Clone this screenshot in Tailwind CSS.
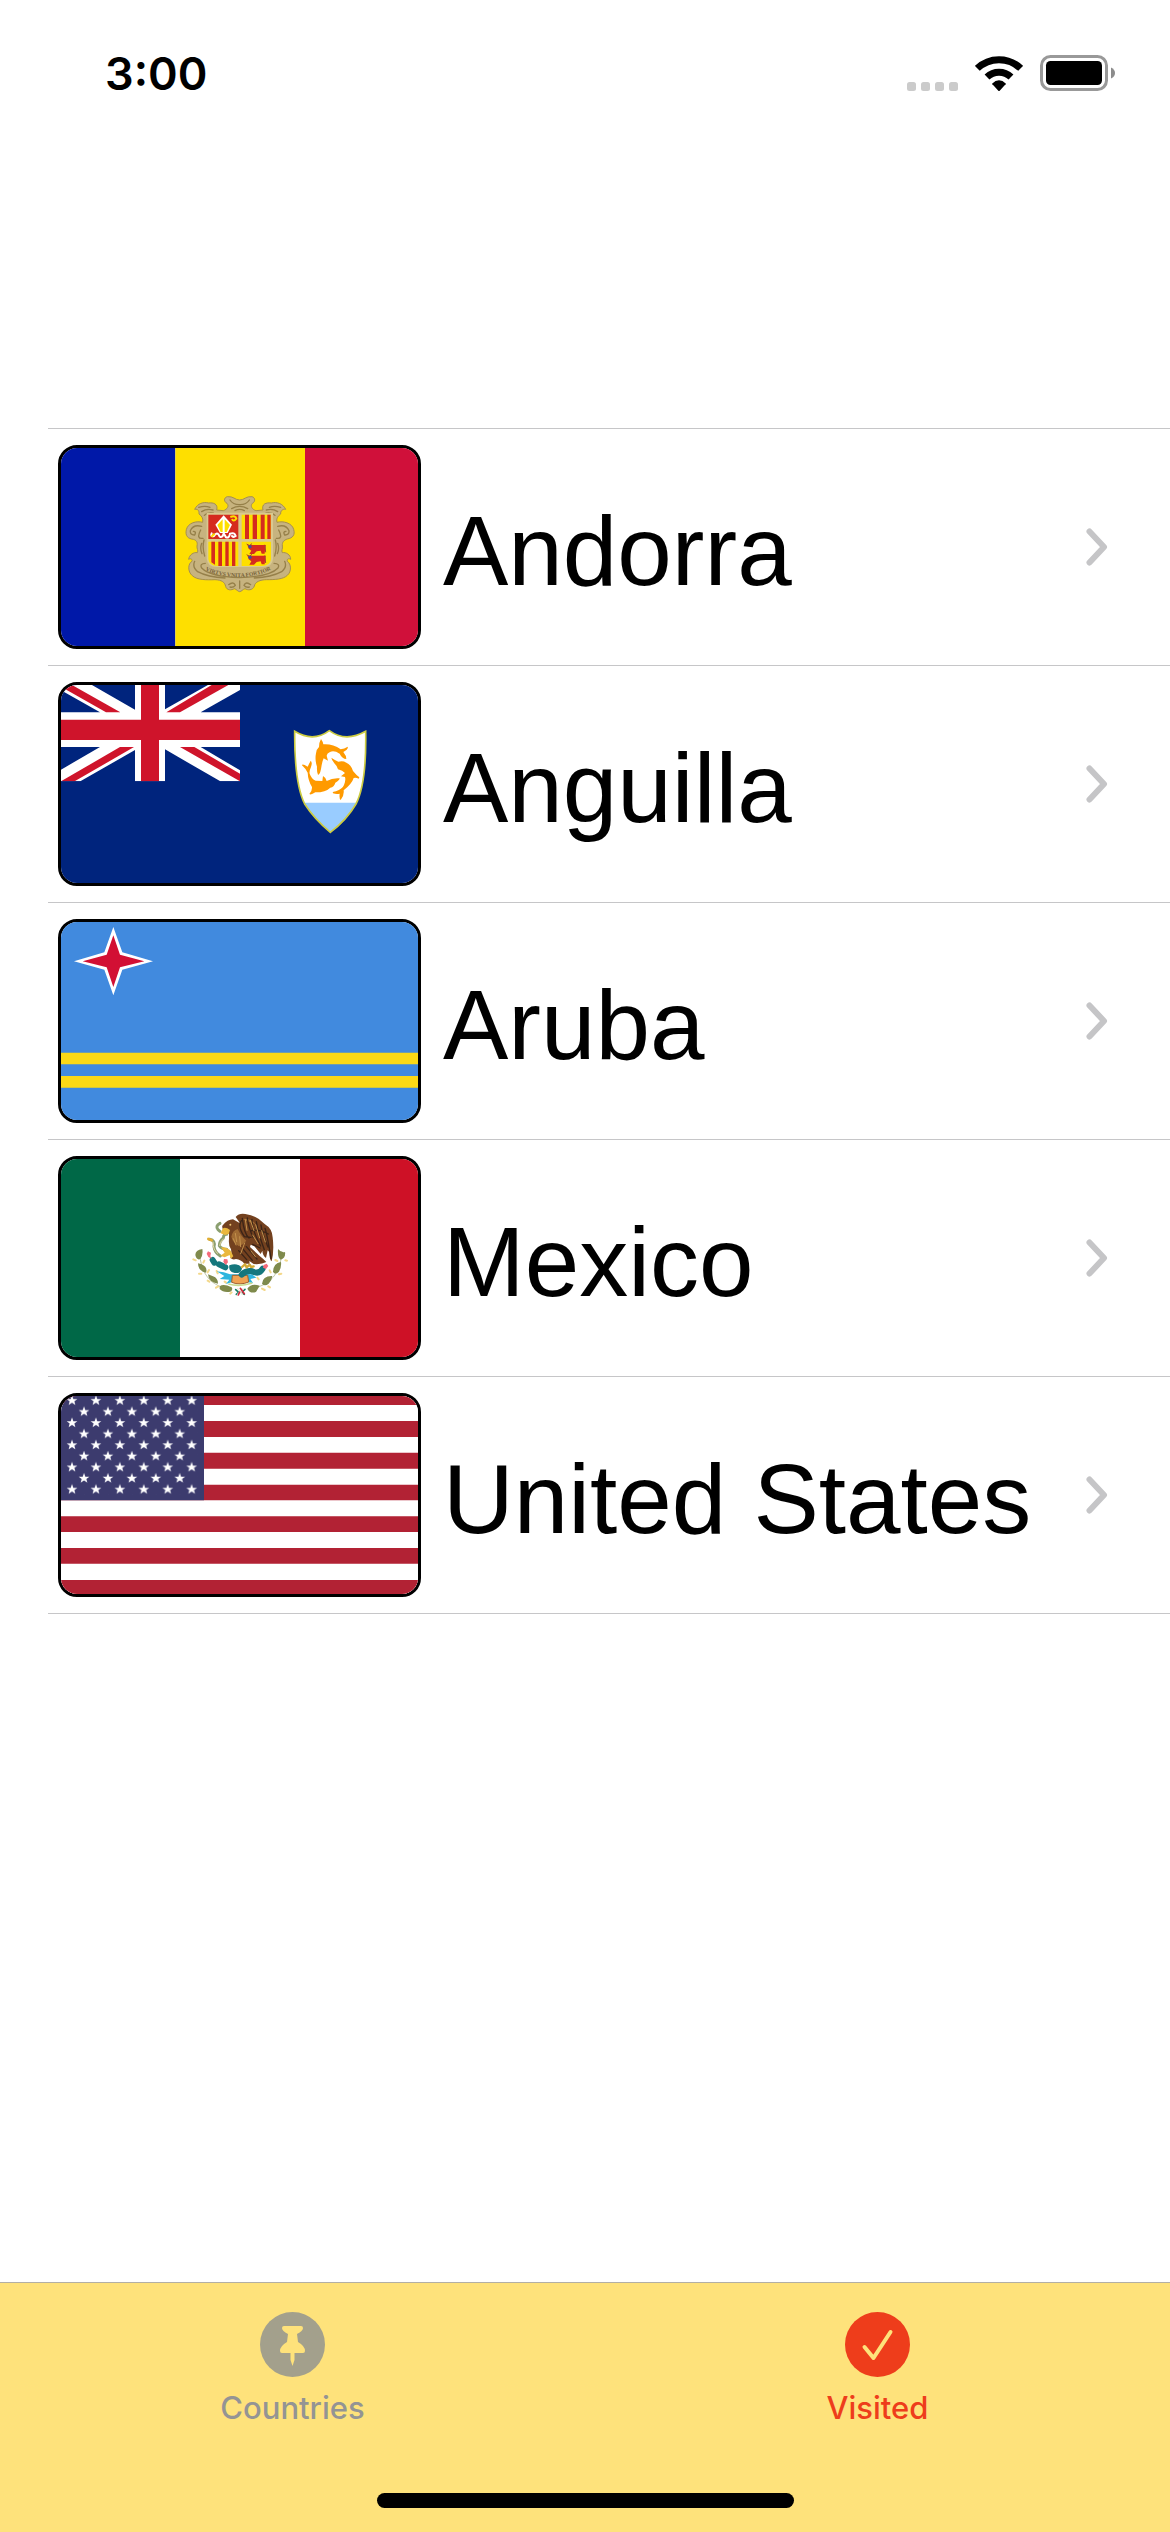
<!DOCTYPE html>
<html lang="en">
<head>
<meta charset="utf-8">
<meta name="viewport" content="width=device-width, initial-scale=1">
<title>Visited</title>
<script src="https://cdn.jsdelivr.net/npm/@tailwindcss/browser@4"></script>
</head>
<body class="bg-white text-black font-[Inter,'Liberation_Sans',sans-serif]">
<svg class="hidden" aria-hidden="true">
  <symbol id="chevron" viewBox="0 0 22 38"><path d="M3.5 3.5 L18 19 L3.5 34.500" fill="none" stroke="#c5c5c7" stroke-width="6" stroke-linecap="round" stroke-linejoin="round"/></symbol>
</svg>
<div class="flex min-h-screen flex-col">
  <header class="flex h-[149px] items-start justify-between pl-[105px] pr-[54px] pt-[46px]">
    <time class="text-[45px] leading-[56px] font-semibold">3:00</time>
    <div class="flex items-end pt-[9px]">
      <svg class="h-9 w-[52px]" viewBox="0 0 52 36" fill="#cbcbcb" aria-label="No signal"><rect y="27" width="9" height="9" rx="2.500"/><rect x="14" y="27" width="9" height="9" rx="2.500"/><rect x="28" y="27" width="9" height="9" rx="2.500"/><rect x="42" y="27" width="9" height="9" rx="2.500"/></svg>
      <svg class="ml-4 h-9 w-12" viewBox="285 75 144 108" aria-label="Wi-Fi">
        <g fill="none" stroke="#000" stroke-width="21"><path d="M292 115 A94 94 0 0 1 422 115"/><path d="M321 141 A52 52 0 0 1 393 141"/></g>
        <path d="M336 161 Q357 141 378 161 Q377 164 374 166 L359 182 Q357 184 355 182 L340 166 Q337 164 336 161Z"/>
      </svg>
      <svg class="ml-[17px] h-9 w-[76px]" viewBox="0 0 76 36" aria-label="Battery full"><rect x="1.500" y="1.500" width="65" height="33" rx="9" fill="none" stroke="#999" stroke-width="3"/><rect x="6" y="6" width="56" height="24" rx="4.500"/><path d="M71 12.500 Q75 14.500 75 18 Q75 21.500 71 23.500Z" fill="#8c8c8c"/></svg>
    </div>
  </header>

  <main class="grow pt-[279px]">
    <ul class="ml-12 border-t border-[#c6c6c8]">
      <li class="border-b border-[#c6c6c8]">
        <a href="#andorra" class="flex h-[236px] items-center pl-2.5 pr-[62px]">
          <svg class="box-border h-[204px] w-[363px] shrink-0 rounded-[19px] border-3 border-black" viewBox="33 54 1071 594" preserveAspectRatio="none" aria-hidden="true">
            <path fill="#0018a8" d="M0 0H376V700H0z"/><path fill="#fedf00" d="M376 0H765V700H376z"/><path fill="#d0103a" d="M765 0H1140V700H765z"/>
            <path fill="#c7b37f" stroke="#a58f50" stroke-width="3" stroke-linejoin="round" d="M569 210 C555 210 550 198 532 200 C520 203 522 216 531 220 C538 228 532 238 520 242 L500 240 C505 222 490 217 476 219 C460 215 443 220 434 238 C445 236 448 244 447 252 C456 258 460 266 458 277 C440 272 414 278 409 299 C405 318 414 326 430 328 C438 330 444 336 441 348 C440 357 446 361 442 368 C431 366 418 374 416 388 C422 384 428 388 426 394 C414 400 412 425 427 437 C440 450 470 450 495 449 C515 450 524 456 527 469 C530 482 545 481 553 476 C560 478 564 485 569 485 C574 485 578 478 585 476 C593 481 608 482 613 468 C615 456 630 449 650 449 C675 449 700 448 712 436 C725 425 724 402 712 394 C710 387 716 384 722 388 C722 374 708 366 697 368 C693 361 699 357 697 348 C696 336 702 330 712 327 C728 324 736 315 731 298 C726 279 700 272 681 277 C678 266 684 258 692 252 C691 244 697 236 707 238 C698 220 680 215 664 219 C648 217 634 222 639 240 L618 242 C606 238 600 228 607 220 C616 216 617 203 606 200 C588 198 583 210 569 210Z"/>
            <g fill="none" stroke="#96804a" stroke-width="4" stroke-linecap="round">
              <path d="M540 210 Q550 225 569 224 Q588 225 598 210 M545 236 Q569 222 593 236 M555 242 Q569 234 583 242"/>
              <path d="M446 232 Q465 226 480 232 M455 245 Q470 235 489 240 M463 256 Q472 246 490 249 M692 232 Q673 226 658 232 M683 245 Q668 235 649 240 M675 256 Q666 246 648 249"/>
              <path d="M455 289 Q430 282 421 302 Q420 316 434 315 Q440 304 430 304 M452 300 Q437 328 459 325 M683 289 Q708 282 717 302 Q718 316 704 315 Q698 304 708 304 M686 300 Q701 328 679 325"/>
              <path d="M455 340 Q449 357 456 371 M462 330 Q456 352 464 378 M683 340 Q689 357 682 371 M676 330 Q682 352 674 378"/>
              <path d="M466 400 Q448 401 455 414 Q480 440 569 443 Q660 440 684 414 Q691 401 672 400 M434 394 Q426 411 443 425 Q474 442 525 444 M704 394 Q712 411 695 425 Q664 442 613 444"/>
              <path d="M536 464 Q550 453 556 466 Q549 474 540 471 M602 464 Q588 453 582 466 Q589 474 598 471 M569 453 V475"/>
            </g>
            <path fill="#d9c98f" d="M470 248H669V386Q668 411 638 411H501Q472 411 470 386z"/>
            <path fill="#d52b1e" d="M475 254H565V327H475z"/>
            <path fill="#fedf00" d="M575 254H663V327H575z M475 335H565V408H502Q478 408 475 388z M575 335H663V388Q660 408 636 408H575z"/>
            <path fill="#d52b1e" d="M585 254h12v73h-12z M608 254h13v73h-13z M632 254h12v73h-12z M652 254h10v73h-10z M484 335h11v69l-11-7z M505 335h11v73h-11z M526 335h10v73h-10z M546 335h10v73h-10z"/>
            <path fill="#fff" d="M521 256 L546 284 L533 309 H510 L496 284Z"/><path fill="#fedf00" d="M518 268 V306 H512 L502 285Z M524 268 V306 H530 L540 285Z"/>
            <path fill="none" stroke="#fff" stroke-width="6" stroke-linecap="round" d="M485 310 Q480 321 492 318 Q499 306 506 314 Q510 326 518 318 L521 310 L528 322 Q538 325 540 311 Q554 306 557 318 Q551 323 546 318"/>
            <path fill="none" stroke="#fedf00" stroke-width="6" d="M541 261 Q557 255 559 266 Q550 277 546 267 M484 320 L494 311"/>
            <g id="cow"><path fill="#d52b1e" d="M592 344 L605 345 H640 Q650 342 646 350 L644 371 H635 L632 362 L620 364 L612 372 H598 L604 362 L596 356Z"/><path d="M590 342 l8 5 8-6 M645 345 l2 22" fill="none" stroke="#a4472e" stroke-width="3"/><circle cx="600" cy="350" r="5" fill="#405096"/></g>
            <use href="#cow" y="32"/>
            <path id="motto" fill="none" d="M464 420 Q510 442 569 441 Q628 440 680 411"/>
            <text font-family="Liberation Serif,serif" font-size="17" font-weight="700" fill="#74603a"><textPath href="#motto" startOffset="2">VIRTVS VNITA FORTIOR</textPath></text>
          </svg>
          <span class="ml-[22px] grow whitespace-nowrap pt-2 font-['Liberation_Sans',Arial,sans-serif] text-[98px] leading-[120px]">Andorra</span>
          <svg class="h-[38px] w-[22px] shrink-0" aria-hidden="true"><use href="#chevron"/></svg>
        </a>
      </li>
      <li class="border-b border-[#c6c6c8]">
        <a href="#anguilla" class="flex h-[236px] items-center pl-2.5 pr-[62px]">
          <svg class="box-border h-[204px] w-[363px] shrink-0 rounded-[19px] border-3 border-black" viewBox="33 45 1071 594" preserveAspectRatio="none" aria-hidden="true">
            <path fill="#00247d" d="M0 0H1140V690H0z"/>
            <clipPath id="canton"><path d="M33 25H570V334H33z"/></clipPath>
            <g clip-path="url(#canton)">
              <path fill="#fff" d="M33 25 H91 L255 119 V25 H345 V118 L509 25 H570 V60 L452 127 H570 V231 H452 L570 301 V334 H511 L345 238 V334 H255 V240 L91 334 H33 V299 L150 231 H33 V127 H150 L33 61Z"/>
              <path fill="#cf142b" d="M273 25H327V334H273z M33 149H570V210H33z M33 32 L66 45 L211 127 H168 L33 50z M349 127 L485 45 H535 L390 127z M390 231 H433 L570 311 V334z M33 334 L210 231 H252 L74 334z"/>
            </g>
            <path fill="#fff" d="M734 184 Q790 218 838 182 Q887 218 947 184 Q950 340 918 402 Q890 450 841 487 Q793 447 764 402 Q733 340 734 184Z"/>
            <path fill="#9cf" d="M762 398H919Q890 450 841 487Q790 446 762 398z"/>
            <path fill="none" stroke="#cccc42" stroke-width="5" d="M734 184 Q790 218 838 182 Q887 218 947 184 Q950 340 918 402 Q890 450 841 487 Q793 447 764 402 Q733 340 734 184Z"/>
            <g fill="#ff9a00">
              <path d="M813 207 Q820 217 820 223 Q848 221 872 238 Q883 237 893 230 Q896 237 880 246 Q889 257 889 267 Q876 266 869 251 Q852 240 840 246 Q831 250 830 257 L834 272 L821 265 Q816 276 813 297 Q809 316 804 314 Q800 307 801 290 Q794 270 798 250 Q799 238 807 231 Q807 217 813 207Z"/>
              <path d="M844 263 Q854 270 865 275 Q879 271 889 278 Q903 283 909 303 Q921 317 928 322 L926 326 Q918 322 911 324 Q906 341 881 361 Q883 377 872 390 Q867 387 869 371 Q860 374 849 370 Q845 365 858 364 Q877 357 882 345 Q888 331 885 321 L873 319 L885 309 Q878 301 864 298 Q863 290 853 280 Q845 270 844 263Z"/>
              <path d="M782 272 Q788 278 783 291 Q777 304 779 311 Q785 327 797 332 L817 333 L819 318 Q828 323 830 333 Q848 323 869 325 Q869 331 856 338 Q852 351 841 353 Q827 367 796 367 Q783 376 778 372 Q787 362 786 351 Q774 331 773 308 Q767 296 756 286 Q756 280 773 290 Q777 282 782 272Z"/>
            </g>
          </svg>
          <span class="ml-[22px] grow whitespace-nowrap pt-2 font-['Liberation_Sans',Arial,sans-serif] text-[98px] leading-[120px]">Anguilla</span>
          <svg class="h-[38px] w-[22px] shrink-0" aria-hidden="true"><use href="#chevron"/></svg>
        </a>
      </li>
      <li class="border-b border-[#c6c6c8]">
        <a href="#aruba" class="flex h-[236px] items-center pl-2.5 pr-[62px]">
          <svg class="box-border h-[204px] w-[363px] shrink-0 rounded-[19px] border-3 border-black" viewBox="33 51 1071 594" preserveAspectRatio="none" aria-hidden="true">
            <path fill="#418ade" d="M0 0H1140V690H0z"/>
            <path fill="#fbd916" d="M0 443H1140V478H0z M0 513H1140V548H0z"/>
            <path fill="#fff" d="M190 66 L217 142 L309 169 L217 194 L190 271 L163 194 L72 169 L163 142Z"/>
            <path fill="#d21034" d="M190 91 L210 149 L283 169 L210 187 L190 246 L170 187 L98 169 L170 149Z"/>
          </svg>
          <span class="ml-[22px] grow whitespace-nowrap pt-2 font-['Liberation_Sans',Arial,sans-serif] text-[98px] leading-[120px]">Aruba</span>
          <svg class="h-[38px] w-[22px] shrink-0" aria-hidden="true"><use href="#chevron"/></svg>
        </a>
      </li>
      <li class="border-b border-[#c6c6c8]">
        <a href="#mexico" class="flex h-[236px] items-center pl-2.5 pr-[62px]">
          <svg class="box-border h-[204px] w-[363px] shrink-0 rounded-[19px] border-3 border-black" viewBox="33 42 1071 594" preserveAspectRatio="none" aria-hidden="true">
            <path fill="#006847" d="M0 0H390V690H0z"/><path fill="#fff" d="M390 0H750V690H390z"/><path fill="#ce1126" d="M750 0H1140V690H750z"/>
            <g fill="none" stroke="#a3ab7c" stroke-width="2"><path d="M449 320 Q451 420 545 434 M695 320 Q693 415 600 433"/></g>
            <g fill="#7f8a4c">
              <path d="M457 312 Q436 315 436 330 Q440 347 451 342 Q460 330 457 312Z M444 355 Q444 378 468 383 Q474 367 455 358Z M474 388 Q476 412 504 416 Q504 399 489 394Z M509 424 Q520 414 545 427 Q550 434 541 440 Q520 444 509 432Z"/>
              <path d="M684 312 Q682 338 692 344 Q708 338 705 321 Q695 325 684 312Z M693 351 Q670 355 669 380 Q675 391 687 380 Q695 366 693 351Z M667 393 Q638 392 636 416 Q644 426 656 416 Q666 406 667 393Z M629 422 Q604 413 592 431 Q600 447 618 441Z"/>
            </g>
            <g fill="none" stroke="#f3d88a" stroke-width="6" stroke-linecap="round"><path d="M430 343l7 3 M463 347l-3 6 M447 386l7 0 M477 375l-4 7 M473 407l5 3 M500 378l3 7 M524 410l4 3 M498 428l7-4 M676 345l6 3 M706 346l5 1 M659 376l3 6 M687 388l7-2 M622 398l4 5 M655 424l5 3 M636 431l8 4 M545 442l-4 4"/></g>
            <path fill="#2db5de" d="M500 379 Q523 380 540 388 H606 L619 398 L601 402 L609 414 L590 411 H547 L528 417 L538 404 L509 402 L523 393Z"/>
            <path fill="#efa253" stroke="#9d602d" stroke-width="3" d="M547 391 H593 L596 411 Q570 422 545 412Z"/>
            <path fill="none" stroke="#c8db91" stroke-width="5" d="M535 417 Q569 427 607 414"/>
            <path fill="none" stroke="#15777d" stroke-width="18" stroke-linecap="round" stroke-linejoin="round" d="M488 345 L493 353 M507 358 L526 367 M548 369 L563 370 M575 389 Q587 376 604 378 Q628 390 638 371"/>
            <path fill="#15777d" d="M538 361Q563 351 576 370Q575 386 554 384Q535 381 538 361"/>
            <path fill="none" stroke="#8b9f70" stroke-width="9" stroke-linecap="round" stroke-linejoin="round" d="M510 235 Q495 243 504 254 L510 259 M530 268 Q521 267 520 279 Q508 289 508 302 Q514 312 530 313 M479 283 Q497 286 492 305 Q494 323 511 333"/>
            <path fill="none" stroke="#e5d5a0" stroke-width="3" d="M521 281 Q508 292 509 303 M489 290 Q489 316 504 326"/>
            <path d="M475 282l10 4" stroke="#e1ad31" stroke-width="8" stroke-linecap="round"/>
            <path fill="#73411f" d="M557 216 Q568 203 586 207 Q620 211 644 237 Q667 251 668 277 Q673 318 665 349 Q658 345 658 322 L653 316 L648 339 Q638 332 637 317 L632 327 L613 304 L602 299 L600 306 L629 333 Q638 340 649 351 Q635 359 611 357 L598 348 L599 356 H583 Q573 344 558 342 Q548 346 541 338 Q546 329 543 313 Q535 303 537 282 L537 267 L523 256 Q515 253 517 242 Q533 223 549 223 L570 235Z"/>
            <path fill="#a06b33" d="M544 275 Q548 256 563 252 Q574 275 589 287 Q580 299 567 304 Q548 293 544 275Z M577 222 Q602 218 617 238 L592 229Z"/>
            <g fill="none" stroke="#3b2417" stroke-width="4" stroke-linecap="round"><path d="M577 220 Q582 266 597 279 M592 219 Q596 251 610 278 M606 223 Q605 253 632 303 M619 230 Q625 267 643 314 M633 240 Q635 261 654 306 M645 250 Q651 267 663 340 M574 227 Q562 245 583 275 L603 277 M608 298 L630 309 M577 310 L607 346 M589 305 L621 342 M566 317 L590 344 M602 258 Q624 250 655 267"/></g>
            <g fill="none" stroke="#c3924d" stroke-width="3" stroke-linecap="round"><path d="M586 224 L591 256 M601 226 L612 257 M617 239 L629 279 M635 257 L646 291 M556 265 L560 290 M569 275 L572 305 M584 294 L572 326 M608 270 L624 296 M603 318 L617 336 M550 281 L558 300"/></g>
            <path fill="#eab83d" d="M516 254 Q520 245 532 250 L540 255 L536 267 L525 270 L512 265Z M513 307 Q529 304 542 317 L550 334 L542 341 L539 330 L524 337 L511 332 L524 323Z"/>
            <path fill="none" stroke="#d1a936" stroke-width="7" stroke-linecap="round" stroke-linejoin="round" d="M576 366 L585 358 L590 367 L599 359 L603 366 L611 364"/>
            <circle cx="541" cy="239" r="3" fill="#eac273"/>
            <g fill="#f56b7b"><path d="M474 319l9 4-2 11 4 7-10-5-5-10z M522 342l10 1 2 9-7 8-7-10z M641 360l9-4 5 7-7 9-9-4z"/></g>
            <g fill="none" stroke-width="5" stroke-linecap="round"><path stroke="#197b62" d="M557 434l9 8-7 6 M585 433l-10 9 8 6"/><path stroke="#f0e9df" d="M563 431l13 16 M579 432l-16 17"/><path stroke="#d4293d" d="M571 430l12 16 M569 441l-4 9"/></g>
          </svg>
          <span class="ml-[22px] grow whitespace-nowrap pt-2 font-['Liberation_Sans',Arial,sans-serif] text-[98px] leading-[120px]">Mexico</span>
          <svg class="h-[38px] w-[22px] shrink-0" aria-hidden="true"><use href="#chevron"/></svg>
        </a>
      </li>
      <li class="border-b border-[#c6c6c8]">
        <a href="#united-states" class="flex h-[236px] items-center pl-2.5 pr-[62px]">
          <svg class="box-border h-[204px] w-[363px] shrink-0 rounded-[19px] border-3 border-black" viewBox="33 48 1071 594" preserveAspectRatio="none" aria-hidden="true">
            <defs><pattern id="stars" patternUnits="userSpaceOnUse" x="48" y="45" width="71.800" height="66.600"><path id="star" fill="#fff" d="M18 1 l4 11 h12 l-9 7 3 11 -10 -7 -10 7 3 -11 -9 -7 h12z"/><use href="#star" x="36" y="33.300"/></pattern></defs>
            <path fill="#fff" d="M0 0H1140V700H0z"/>
            <path fill="#b22234" d="M0 27H1140V75H0z M0 123H1140V171H0z M0 218H1140V266H0z M0 314H1140V361H0z M0 409H1140V456H0z M0 504H1140V551H0z M0 600H1140V648H0z"/>
            <path fill="#3c3b6e" d="M0 0H462V361H0z"/>
            <path fill="url(#stars)" d="M48 45H443V345H48z"/>
          </svg>
          <span class="ml-[22px] grow whitespace-nowrap pt-2 font-['Liberation_Sans',Arial,sans-serif] text-[98px] leading-[120px]">United States</span>
          <svg class="h-[38px] w-[22px] shrink-0" aria-hidden="true"><use href="#chevron"/></svg>
        </a>
      </li>
    </ul>
  </main>

  <footer class="flex h-[250px] flex-col justify-between border-t border-[#b2afa5] bg-[#fee27b] pb-6 pt-[29px]">
    <nav class="grid grid-cols-2 text-[31px] leading-9 font-medium">
      <a href="#countries" class="flex flex-col items-center gap-[13px] text-[#949494]">
        <svg class="h-[65px] w-[65px]" viewBox="0 0 65 65" aria-hidden="true"><circle cx="32.500" cy="32.500" r="32.500" fill="#a3a08c"/><path fill="#fee27b" d="M24 14 H41 Q43 14 43 16 Q43 19 37 22 L38 30 Q45 34 45 39 Q45 41 43 41 H34.500 V48 L32.500 54 L30.500 48 V41 H22 Q20 41 20 39 Q20 34 27 30 L28 22 Q22 19 22 16 Q22 14 24 14Z"/></svg>
        <span>Countries</span>
      </a>
      <a href="#visited" aria-current="page" class="flex flex-col items-center gap-[13px] text-[#ee3d1b]">
        <svg class="h-[65px] w-[65px]" viewBox="0 0 65 65" aria-hidden="true"><circle cx="32.500" cy="32.500" r="32.500" fill="#ee3d1b"/><path d="M19.500 35 L28.500 46 L45.500 20" fill="none" stroke="#fee27b" stroke-width="4" stroke-linecap="round" stroke-linejoin="round"/></svg>
        <span>Visited</span>
      </a>
    </nav>
    <div class="mx-auto h-[15px] w-[417px] rounded-full bg-black"></div>
  </footer>
</div>
</body>
</html>
